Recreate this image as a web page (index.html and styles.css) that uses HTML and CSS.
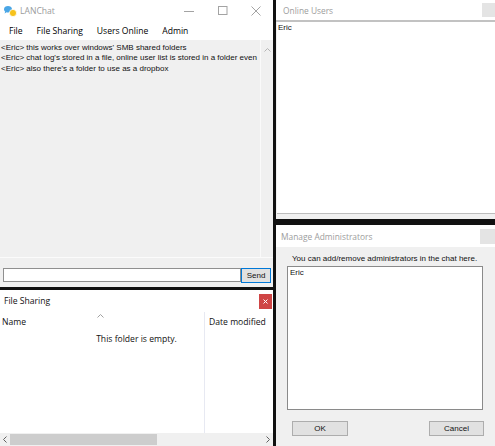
FILE: index.html
```html
<!DOCTYPE html>
<html lang="en">
<head>
<meta charset="utf-8">
<title>LANChat</title>
<link rel="stylesheet" href="styles.css">
</head>
<body>
<div class="desk">
  <div class="col col-left">
    <section class="main">
      <header class="titlebar">
        <svg class="app-icon" width="14" height="12" viewBox="0 0 14 12">
          <path d="M1 4.2C1 2.2 2.9 1 5 1s4 1.2 4 3.2S7.1 7.4 5 7.4c-.5 0-1 0-1.4-.2L1.6 8.4l.6-1.8C1.5 6 1 5.2 1 4.2z" fill="#4aa6e6"/>
          <circle cx="10" cy="8" r="3.6" fill="#f6c21c" stroke="#fff" stroke-width=".8"/>
        </svg>
        <span class="title">LANChat</span>
        <div class="caption">
          <span class="cap-btn"><svg width="11" height="3" viewBox="0 0 11 3"><path d="M0 1.5h10" stroke="#a3a3a3" stroke-width="1"/></svg></span>
          <span class="cap-btn"><svg width="10" height="10" viewBox="0 0 10 10"><rect x="0.5" y="0.5" width="8.5" height="8" fill="none" stroke="#a3a3a3" stroke-width="1"/></svg></span>
          <span class="cap-btn"><svg width="10" height="10" viewBox="0 0 10 10"><path d="M0.5 0.5l9 9M9.5 0.5l-9 9" stroke="#a3a3a3" stroke-width="1"/></svg></span>
        </div>
      </header>
      <nav class="menubar">
        <span>File</span>
        <span>File Sharing</span>
        <span>Users Online</span>
        <span>Admin</span>
      </nav>
      <div class="chat">
        <div class="chat-log">
          <p>&lt;Eric&gt; this works over windows' SMB shared folders</p>
          <p>&lt;Eric&gt; chat log's stored in a file, online user list is stored in a folder even</p>
          <p>&lt;Eric&gt; also there's a folder to use as a dropbox</p>
        </div>
        <div class="vscroll">
          <svg width="7" height="4" viewBox="0 0 7 4"><path d="M0.5 3.5l3-3 3 3" fill="none" stroke="#b5b5b5" stroke-width="1"/></svg>
        </div>
      </div>
      <div class="compose">
        <input class="msg" type="text" value="">
        <button class="btn send">Send</button>
      </div>
    </section>

    <section class="files">
      <header class="files-title">
        <span class="files-name">File Sharing</span>
        <span class="close-red"><svg width="5" height="5" viewBox="0 0 5 5"><path d="M0.5 0.5l4 4M4.5 0.5l-4 4" stroke="#fff" stroke-width="1"/></svg></span>
      </header>
      <div class="filelist">
        <div class="hd-name">
          <svg class="caret" width="7" height="4" viewBox="0 0 7 4"><path d="M0.5 3.5l3-3 3 3" fill="none" stroke="#a0a0a0" stroke-width="1"/></svg>
          <span class="hd-text">Name</span>
        </div>
        <div class="col-date"><span class="hd-text">Date modified</span></div>
        <div class="empty">This folder is empty.</div>
      </div>
      <div class="hscroll">
        <span class="harrow"><svg width="4" height="7" viewBox="0 0 4 7"><path d="M3.5 0.5l-3 3 3 3" fill="none" stroke="#606060" stroke-width="1"/></svg></span>
        <span class="track"><span class="thumb"></span></span>
        <span class="harrow"><svg width="4" height="7" viewBox="0 0 4 7"><path d="M0.5 0.5l3 3-3 3" fill="none" stroke="#606060" stroke-width="1"/></svg></span>
      </div>
    </section>
  </div>

  <div class="col col-right">
    <section class="online">
      <header class="tool-title">
        <span>Online Users</span>
        <span class="ghost-btn"></span>
      </header>
      <div class="userlist">
        <p>Eric</p>
      </div>
      <div class="strip"></div>
    </section>

    <section class="admins">
      <header class="tool-title admin-title">
        <span>Manage Administrators</span>
        <span class="ghost-btn"></span>
      </header>
      <div class="admin-body">
        <p class="admin-label">You can add/remove administrators in the chat here.</p>
        <div class="adminlist"><p>Eric</p></div>
        <div class="admin-actions">
          <button class="btn ok">OK</button>
          <button class="btn cancel">Cancel</button>
        </div>
      </div>
    </section>
  </div>
</div>
</body>
</html>
```

FILE: styles.css
```css
* { box-sizing: border-box; margin: 0; padding: 0; }

html, body { width: 495px; height: 446px; overflow: hidden; }

body {
  background: #111;
  font-family: "Liberation Sans", Arial, sans-serif;
  font-size: 8px;
  color: #111;
}

.desk {
  display: grid;
  grid-template-columns: 273px 1fr;
  column-gap: 3px;
  height: 446px;
}

.col { display: flex; flex-direction: column; min-height: 0; }
.col-left { gap: 3px; }
.col-right { gap: 6px; }

/* ---------- main chat window ---------- */
.main {
  height: 287px;
  background: #f0f0f0;
  display: flex;
  flex-direction: column;
}

.titlebar {
  height: 22px;
  background: #fff;
  display: flex;
  align-items: center;
}

.app-icon { margin-left: 3px; }

.title {
  font-family: "Open Sans", sans-serif;
  font-size: 8.6px;
  color: #9b9b9b;
  margin-left: 3px;
}

.caption { margin-left: auto; display: flex; height: 100%; }
.cap-btn { width: 33.5px; display: flex; align-items: center; justify-content: center; }

.menubar {
  height: 18px;
  background: #fff;
  display: flex;
  align-items: center;
  gap: 14px;
  padding-left: 9px;
  font-family: "Open Sans", sans-serif;
  font-size: 8.6px;
  color: #000;
}

.chat {
  height: 218px;
  display: flex;
  border-bottom: 1px solid #fbfbfb;
}

.chat-log {
  flex: 1;
  padding: 2.5px 0 0 1px;
  line-height: 10.67px;
  white-space: nowrap;
  overflow: hidden;
}

.vscroll {
  width: 13px;
  border-left: 1px solid #fafafa;
  display: flex;
  justify-content: center;
  align-items: flex-start;
  padding-top: 8px;
}

.compose {
  flex: 1;
  display: flex;
  align-items: flex-start;
  padding: 10px 0 0 3px;
}

.msg {
  width: 238px;
  height: 14px;
  border: 1px solid #8f8f8f;
  background: #fff;
  outline: none;
}

.btn {
  font-family: "Liberation Sans", Arial, sans-serif;
  font-size: 8px;
  color: #111;
  background: #e1e1e1;
  border: 1px solid #adadad;
  line-height: 1;
}

.send {
  width: 30px;
  height: 15px;
  border-color: #0078d7;
}

/* ---------- file sharing window ---------- */
.files {
  flex: 1;
  background: #fff;
  display: flex;
  flex-direction: column;
  min-height: 0;
}

.files-title {
  height: 22px;
  display: flex;
  align-items: center;
  padding-left: 4px;
}

.files-name {
  font-family: "Open Sans", sans-serif;
  font-size: 8.6px;
  color: #111;
}

.close-red {
  margin-left: auto;
  margin-right: 1px;
  width: 13px;
  height: 15px;
  background: #cf4545;
  display: flex;
  align-items: center;
  justify-content: center;
}

.filelist {
  flex: 1;
  display: grid;
  grid-template-columns: 204px 1fr;
  grid-template-rows: 20px 1fr;
  font-family: "Open Sans", sans-serif;
  font-size: 8.6px;
  color: #111;
}

.hd-name {
  grid-column: 1;
  grid-row: 1;
  display: flex;
  flex-direction: column;
  padding-left: 2px;
}

.caret { align-self: center; margin-top: 2px; margin-left: -5px; }

.hd-text { line-height: 12px; }
.hd-name .hd-text { margin-top: -2.5px; }

.col-date {
  grid-column: 2;
  grid-row: 1 / 3;
  border-left: 1px solid #e7e9f2;
  padding: 3.5px 0 0 4px;
  white-space: nowrap;
}

.empty {
  grid-column: 1 / 3;
  grid-row: 2;
  text-align: center;
  line-height: 12px;
  padding-top: 0.5px;
}

.hscroll {
  height: 13px;
  background: #f0f0f0;
  display: flex;
  align-items: stretch;
}

.harrow {
  width: 10px;
  display: flex;
  align-items: center;
  justify-content: center;
}

.track { flex: 1; display: flex; align-items: stretch; padding: 1px 0; }
.thumb { width: 147px; background: #cdcdcd; }

/* ---------- tool windows ---------- */
.tool-title {
  height: 22px;
  background: #fff;
  display: flex;
  align-items: center;
  padding-left: 7px;
  font-family: "Open Sans", sans-serif;
  font-size: 8.4px;
  color: #9d9d9d;
}

.ghost-btn {
  margin-left: auto;
  width: 13px;
  height: 14px;
  background: #e4e4e4;
}

.online {
  height: 219px;
  background: #f0f0f0;
  display: flex;
  flex-direction: column;
}

.online .tool-title { border-bottom: 2px solid #c2c2c2; }

.userlist {
  flex: 1;
  background: #fff;
  margin-left: 1px;
  border-bottom: 1px solid #bdbdbd;
  padding: 1px 0 0 1px;
  line-height: 10px;
}

.strip { height: 5px; }

.admins {
  flex: 1;
  background: #f0f0f0;
  display: flex;
  flex-direction: column;
}

.admin-title { padding-left: 5px; }
.admin-title .ghost-btn { width: 15px; height: 15px; margin-right: 0; }

.admin-body { flex: 1; display: flex; flex-direction: column; }

.admin-label {
  padding: 7px 0 0 16px;
  line-height: 10px;
  white-space: nowrap;
}

.adminlist {
  margin: 2px 0 0 11px;
  width: 196px;
  height: 144px;
  background: #fff;
  border: 1px solid #8a8a8a;
  padding: 1px 0 0 2px;
  line-height: 10px;
}

.admin-actions {
  display: flex;
  justify-content: space-between;
  padding: 11px 11px 0 16px;
}

.ok { width: 56px; height: 15px; }
.cancel { width: 55px; height: 15px; }
```
